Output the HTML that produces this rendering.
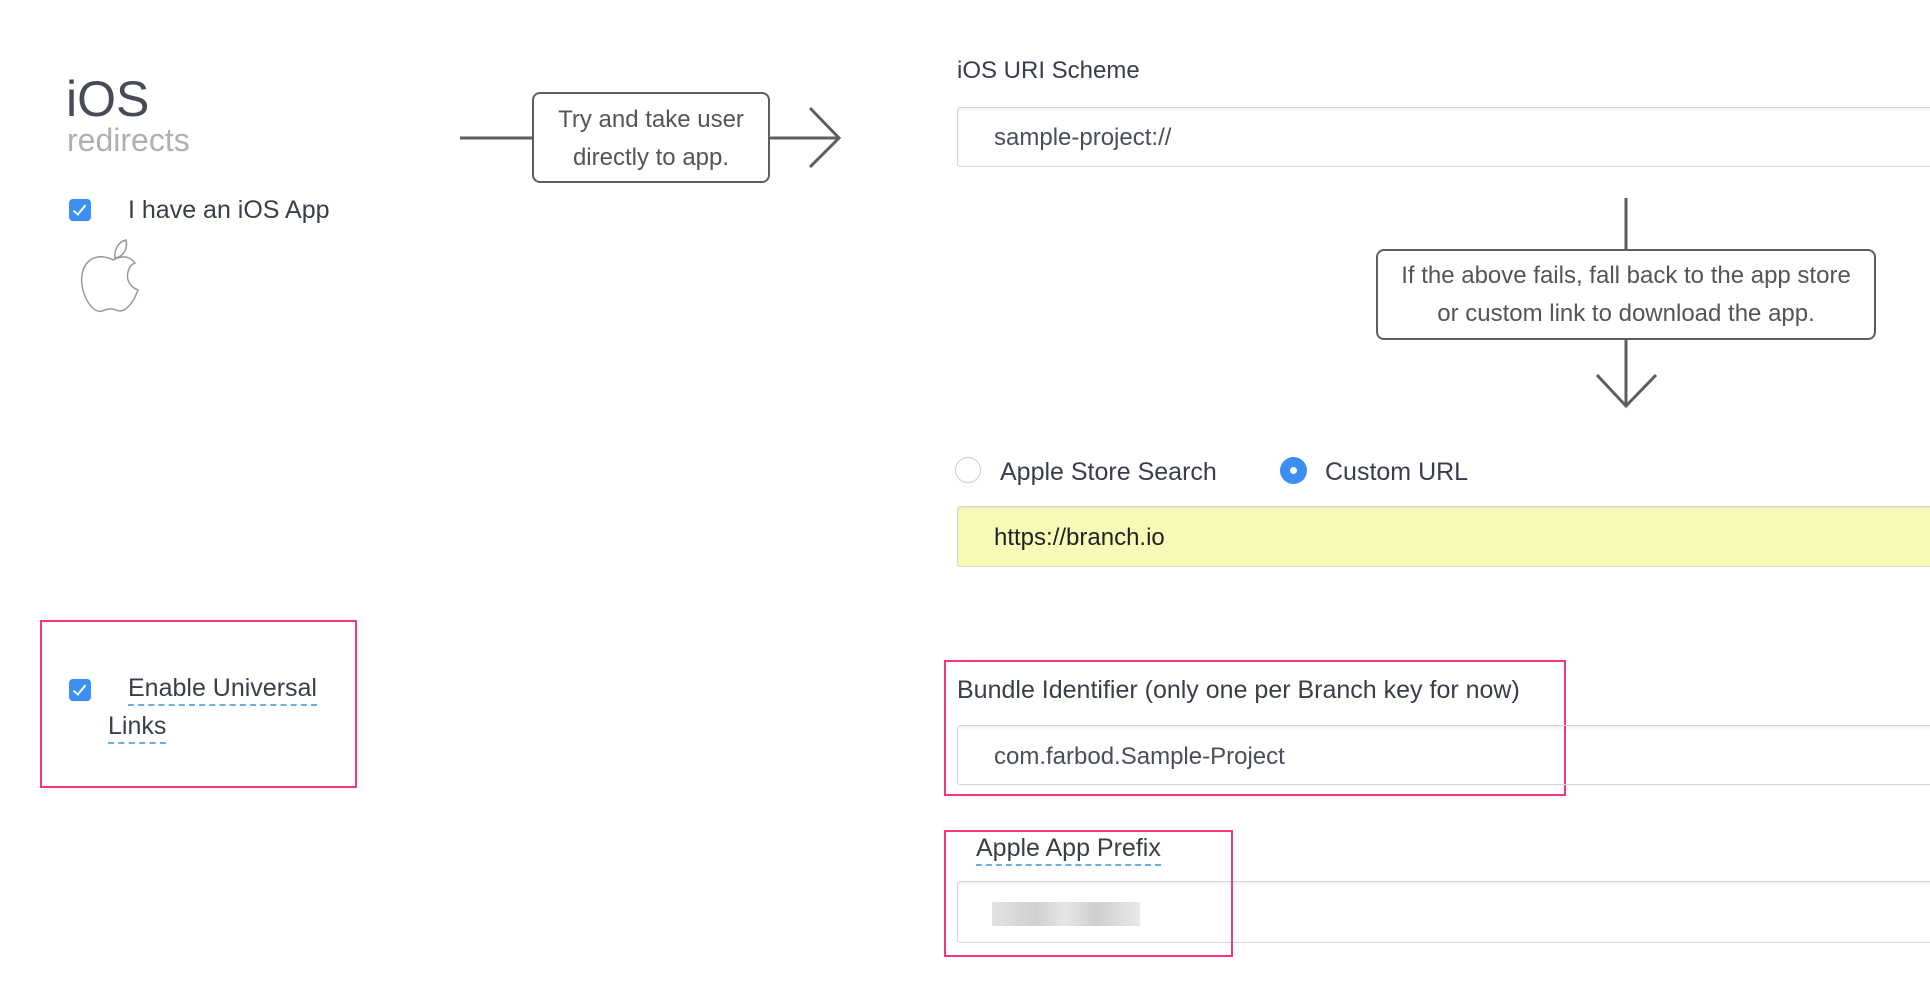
<!DOCTYPE html>
<html><head><meta charset="utf-8"><style>
body{margin:0;width:1930px;height:990px;background:#fff;position:relative;overflow:hidden;font-family:"Liberation Sans",sans-serif;color:#434755}
.a{position:absolute;white-space:nowrap}
.cb{position:absolute;width:22px;height:22px;background:#3b8ff0;border-radius:4px}
.cb:after{content:"";position:absolute;left:7px;top:3px;width:5px;height:11px;border:solid #fff;border-width:0 2px 2px 0;transform:rotate(40deg)}
.inp{position:absolute;left:957px;width:990px;border:1.5px solid #d3d4d8;border-radius:3px;box-shadow:inset 0 2px 2px rgba(0,0,0,.06);font-size:24px;box-sizing:border-box;padding-left:36px;color:#4a4e5a}
.pink{position:absolute;border:2px solid #f53776;box-sizing:border-box}
.box{position:absolute;border:2px solid #5e5e5e;border-radius:8px;box-sizing:border-box;text-align:center;font-size:24px;color:#555;line-height:38px;background:#fff}
.dot{border-bottom:2px dashed #6ab0dd;padding-bottom:2px}
.lb{color:#3a3e4b}
</style></head><body>
<div class="a" style="left:66px;top:70px;font-size:50px;color:#474b58">iOS</div>
<div class="a" style="left:67px;top:122px;font-size:32px;color:#b0b0b0;font-weight:300">redirects</div>
<div class="cb" style="left:69px;top:199px"></div>
<div class="a lb" style="left:128px;top:196px;font-size:25px">I have an iOS App</div>
<svg class="a" style="left:78px;top:236px" width="70" height="78" viewBox="0 0 70 78"><path d="M48 4 C40 6 36 14 37 22 C45 21 50 13 48 4 Z M35 24 C28 20 18 19 11 25 C2 33 2 48 7 60 C11 70 18 77 24 75 C29 73 33 72 38 74 C44 77 50 73 56 63 C58 59 59 56 60 54 C52 51 48 44 50 36 C51 31 54 28 57 27 C52 20 44 19 35 24 Z" fill="none" stroke="#999" stroke-width="1.5"/></svg>
<svg class="a" style="left:0;top:0" width="1930" height="990">
<g stroke="#5e5e5e" stroke-width="3" fill="none">
<line x1="460" y1="138" x2="532" y2="138"/><line x1="769" y1="138" x2="838" y2="138"/>
<polyline points="810,108 839,138 810,167"/>
<line x1="1626" y1="198" x2="1626" y2="249"/><line x1="1626" y1="339" x2="1626" y2="406"/>
<polyline points="1597,375 1626,406 1656,375"/>
</g></svg>
<div class="box" style="left:532px;top:92px;width:238px;height:91px;padding-top:7px">Try and take user<br>directly to app.</div>
<div class="box" style="left:1376px;top:249px;width:500px;height:91px;padding-top:6px">If the above fails, fall back to the app store<br>or custom link to download the app.</div>
<div class="a lb" style="left:957px;top:57px;font-size:24px">iOS URI Scheme</div>
<div class="inp" style="top:107px;height:60px;line-height:60px">sample-project://</div>
<div class="a" style="left:955px;top:457px;width:26px;height:26px;border:1.5px solid #ccc;border-radius:50%;box-sizing:border-box"></div>
<div class="a lb" style="left:1000px;top:458px;font-size:25px">Apple Store Search</div>
<div class="a" style="left:1280px;top:457px;width:27px;height:27px;background:#3b8ff0;border-radius:50%"><div style="position:absolute;left:10px;top:10px;width:7px;height:7px;background:#fff;border-radius:50%"></div></div>
<div class="a lb" style="left:1325px;top:458px;font-size:25px">Custom URL</div>
<div class="inp" style="top:506px;height:61px;line-height:62px;background:#f8fbb8;color:#222">https://branch.io</div>
<div class="pink" style="left:40px;top:620px;width:317px;height:168px"></div>
<div class="cb" style="left:69px;top:679px"></div>
<div class="a lb" style="left:128px;top:674px;font-size:25px"><span class="dot">Enable Universal</span></div>
<div class="a lb" style="left:108px;top:712px;font-size:25px"><span class="dot">Links</span></div>
<div class="pink" style="left:944px;top:660px;width:622px;height:136px"></div>
<div class="a lb" style="left:957px;top:676px;font-size:25px">Bundle Identifier (only one per Branch key for now)</div>
<div class="inp" style="top:725px;height:60px;line-height:61px">com.farbod.Sample-Project</div>
<div class="a lb" style="left:976px;top:834px;font-size:25px"><span class="dot">Apple App Prefix</span></div>
<div class="inp" style="top:881px;height:62px"></div>
<div class="a" style="left:992px;top:902px;width:148px;height:24px;background:linear-gradient(90deg,#ddd,#c8c8c8 30%,#e2e2e2 50%,#c5c5c5 70%,#e5e5e5);opacity:.85"></div>
<div class="pink" style="left:944px;top:830px;width:289px;height:127px"></div>
</body></html>
